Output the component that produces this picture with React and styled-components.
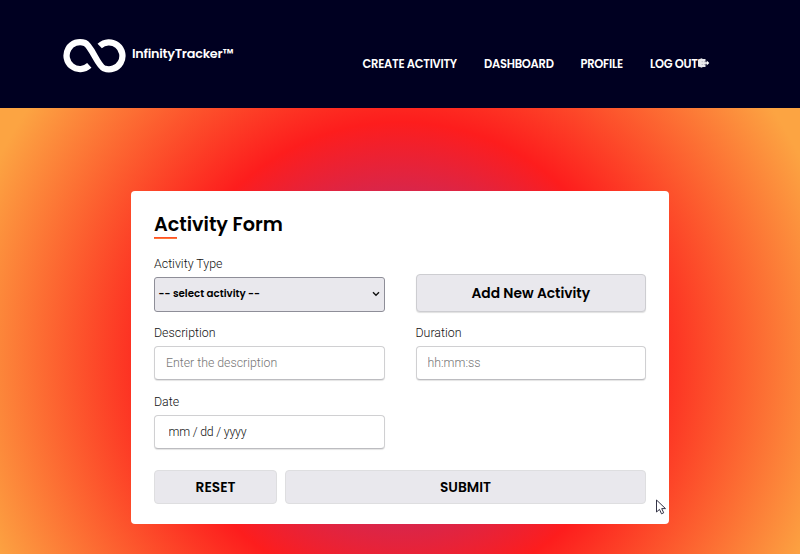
import React from 'react';
import styled, { createGlobalStyle } from 'styled-components';

const GlobalStyle = createGlobalStyle`
  *, *::before, *::after { box-sizing: border-box; }
  body { margin: 0; overflow: hidden; font-family: Roboto, sans-serif; }
`;

const heading = `
  font-family: Poppins, Inter, sans-serif;
  font-weight: 600;
`;

const Page = styled.div`
  height: 554px;
  overflow: hidden;
  position: relative;
`;

const Header = styled.header`
  height: 107.5px;
  background: #000021;
  display: flex;
  color: #fff;
`;

const Brand = styled.a`
  display: flex;
  margin: 38px 0 0 63px;
  width: 299.5px;
  height: 36px;
`;

const BrandName = styled.span`
  ${heading}
  font-size: 12.8px;
  letter-spacing: -0.25px;
  line-height: 18px;
  margin: 7.4px 0 0 6px;
`;

const Nav = styled.nav`
  display: flex;
  padding-top: 56px;
`;

const NavLink = styled.a`
  ${heading}
  display: flex;
  font-size: 11.5px;
  letter-spacing: -0.26px;
  line-height: 16px;
  white-space: nowrap;
  width: ${(p) => p.$width}px;
`;

const Main = styled.main`
  height: 500px;
  padding: 83.5px 131px 0;
  background: radial-gradient(circle, #833ab4 0%, #fd1d1d 50%, #fca442 95%);
`;

const Card = styled.form`
  height: 333px;
  width: 538px;
  padding: 21px 23px 0;
  border-radius: 4px;
  background: #fff;
`;

const Title = styled.h1`
  ${heading}
  margin: 0;
  height: 25px;
  font-size: 19.2px;
  line-height: 25px;
`;

const Accent = styled.div`
  width: 23px;
  height: 2px;
  background: linear-gradient(#ff3c22, #ff8a3c);
`;

const Fields = styled.div`
  display: grid;
  grid-template-columns: 230.5px 230.5px;
  column-gap: 31px;
  grid-template-rows: 69px 69px 68.5px;
  margin-top: 15px;
`;

const Field = styled.div`
  display: flex;
  flex-direction: column;
`;

const Label = styled.label`
  color: #111;
  font-size: 12.4px;
  font-weight: 300;
  line-height: 20px;
  height: 23px;
`;

const Input = styled.input`
  height: 34px;
  width: 100%;
  border: 1px solid #d0d0d2;
  border-bottom-color: #bcbcc0;
  box-shadow: 0 1px 1px #0000001c;
  border-radius: 4px;
  padding: 0 ${(p) => p.$inset || 11}px 1px;
  background: #fff;
  color: #333;
  font: 300 12.3px Roboto, sans-serif;
  letter-spacing: ${(p) => p.$spacing || 0}px;
  outline: none;
  &::placeholder { color: ${(p) => p.$hint || '#757575'}; opacity: 1; }
`;

const Select = styled.div`
  ${heading}
  height: 34.5px;
  display: flex;
  align-items: center;
  justify-content: space-between;
  padding: 0 4px 0 3.5px;
  border: 1px solid #8e8e98;
  border-radius: 3px;
  background: #e9e8ed;
  color: #000;
  font-size: 10.25px;
`;

const Button = styled.button`
  ${heading}
  height: ${(p) => p.$height || 34}px;
  margin-top: ${(p) => p.$top || 0}px;
  padding: 1px 0 0;
  border: 1px solid ${(p) => p.$edge || '#dedee0'};
  box-shadow: ${(p) => (p.$raised ? '0 1px 1px #00000020' : 'none')};
  border-radius: 4px;
  background: #e9e8ed;
  color: #000;
  font-size: 13.8px;
`;

const Actions = styled.div`
  display: grid;
  grid-template-columns: 123px 361px;
  column-gap: 8px;
  margin-top: 9.5px;
`;

const Cursor = styled.svg`
  position: absolute;
  left: 655px;
  top: 499px;
`;

const ExitIcon = styled.svg`
  margin: 2px 0 0 -1px;
`;

function InfinityMark() {
  return (
    <svg width="63" height="36" viewBox="0 0 63 36" fill="none" stroke="#fff" strokeWidth="6.3">
      <path d="M26.3 27.4 A13.5 13.5 0 1 1 22 5 C28.5 7.8 34.5 27.6 41 30.4 A13.5 13.5 0 1 0 36.7 8" />
    </svg>
  );
}

function LogOutMark() {
  return (
    <ExitIcon width="13" height="10" viewBox="0 0 13 10">
      <path d="M1 1.5 5 .3 5.5 1h3v8h-3l-.5.7L1 8.5Z" fill="#fff" opacity=".92" />
      <path d="M8 4.2h1.7V2.6L12.3 5 9.7 7.4V5.8H8Z" fill="#fff" />
      <path d="M5.2 3.2v1M7.4 3.2v1M5.2 6v1M7.4 6v1" stroke="#9a9aaa" strokeWidth=".8" />
    </ExitIcon>
  );
}

export default function App() {
  return (
    <Page>
      <GlobalStyle />
      <Header>
        <Brand>
          <InfinityMark />
          <BrandName>InfinityTracker™</BrandName>
        </Brand>
        <Nav>
          <NavLink $width={121.5}>CREATE ACTIVITY</NavLink>
          <NavLink $width={96.5}>DASHBOARD</NavLink>
          <NavLink $width={69.5}>PROFILE</NavLink>
          <NavLink>LOG OUT<LogOutMark /></NavLink>
        </Nav>
      </Header>
      <Main>
        <Card onSubmit={(e) => e.preventDefault()}>
          <Title>Activity Form</Title>
          <Accent />
          <Fields>
            <Field>
              <Label>Activity Type</Label>
              <Select>
                <span>-- select activity --</span>
                <svg width="8" height="6" viewBox="0 0 8 6" fill="none" stroke="#111" strokeWidth="1.4">
                  <path d="m1 1.2 3 3 3-3" />
                </svg>
              </Select>
            </Field>
            <Button type="button" $height={38} $top={20} $raised $edge="#cdcdd1">Add New Activity</Button>
            <Field>
              <Label>Description</Label>
              <Input placeholder="Enter the description" />
            </Field>
            <Field>
              <Label>Duration</Label>
              <Input placeholder="hh:mm:ss" />
            </Field>
            <Field>
              <Label>Date</Label>
              <Input placeholder="mm / dd / yyyy" $inset={13.5} $hint="#111" $spacing={-0.2} />
            </Field>
          </Fields>
          <Actions>
            <Button type="reset">RESET</Button>
            <Button type="submit">SUBMIT</Button>
          </Actions>
        </Card>
      </Main>
      <Cursor width="12" height="17" viewBox="0 0 12 17">
        <path d="M1.5 1v12l3-2.6 2 4.4 2.2-1-2-4.2h3.8Z" fill="#fff" stroke="#333346" />
      </Cursor>
    </Page>
  );
}
